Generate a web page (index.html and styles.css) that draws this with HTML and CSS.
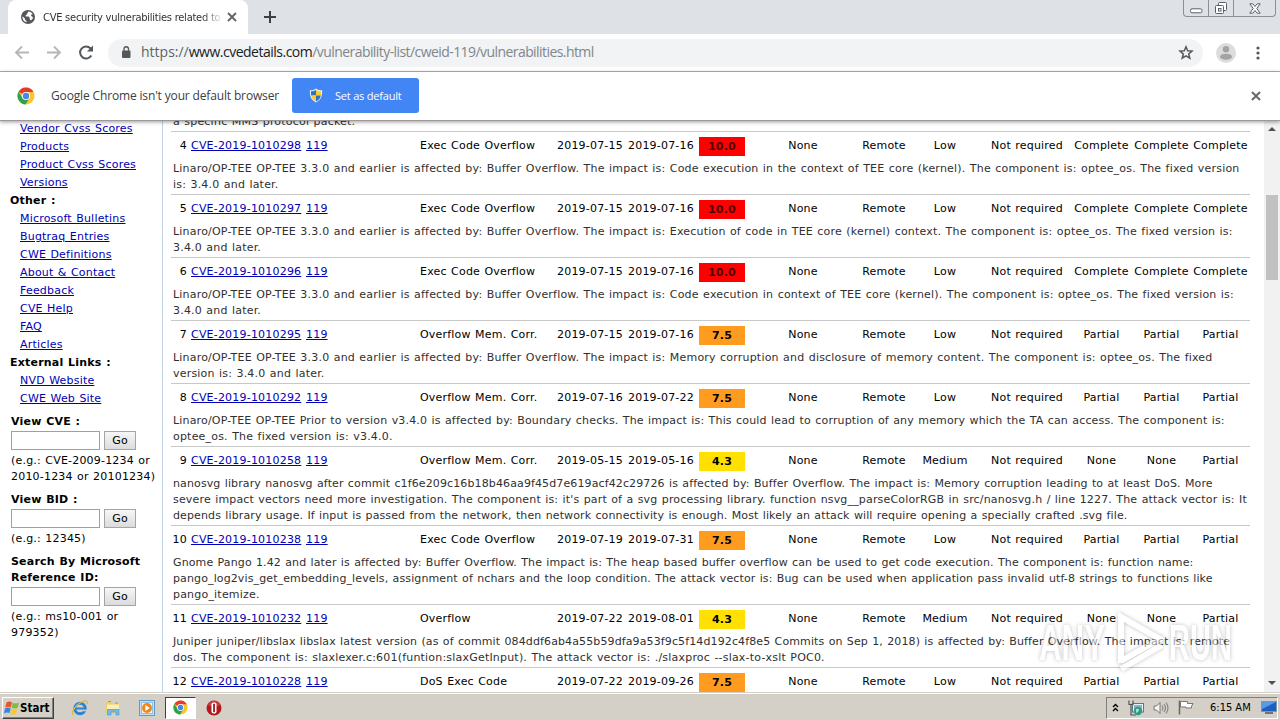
FILE: index.html
```
<!DOCTYPE html>
<html lang="en">
<head>
    <meta charset="UTF-8">
    <title>CVE security vulnerabilities related to CWE 119</title>
    <link rel="stylesheet" href="styles.css">
</head>
<body>
    <!-- Shared icons -->
    <svg class="defs" width="0" height="0">
        <symbol id="chrome" viewBox="0 0 18 18">
            <circle cx="9" cy="9" r="8.5" fill="#fbc52d"/>
            <path d="M9 9 1.6 4.8A8.5 8.5 0 0 1 16.5 5H9z" fill="#e33b2e"/>
            <path d="M9 9 5.5 11 1.6 4.8A8.5 8.5 0 0 0 8.5 17.5L12.5 11z" fill="#2ba24c"/>
            <circle cx="9" cy="9" r="4.1" fill="#fff"/>
            <circle cx="9" cy="9" r="3.2" fill="#4a86e8"/>
        </symbol>
    </svg>

    <div id="tabstrip">
        <div class="tab">
            <svg class="favicon" width="14" height="14" viewBox="0 0 14 14">
                <circle cx="7" cy="7" r="7" fill="#54585c"/>
                <path d="M7.6 1.6 6.3 3v1.2l-1.6.9v1.4h3l1 1.2v1.6l1.2 1.3 1.9-2V7l-1.7-1 .2-1.5 1.5-.5A6 6 0 0 0 7.6 1.6zM1.5 6.3l2.6 2.4v1.2l1.4 1v1.4A5.6 5.6 0 0 1 1.5 6.3z" fill="#fff"/>
            </svg>
            <span class="tab-title">CVE security vulnerabilities related to</span>
            <svg width="10" height="10" viewBox="0 0 10 10"><path d="M1 1l8 8M9 1L1 9" stroke="#5f6368" stroke-width="1.8"/></svg>
        </div>
        <svg class="new-tab" width="12" height="12" viewBox="0 0 12 12"><path d="M6 0v12M0 6h12" stroke="#3c4043" stroke-width="2"/></svg>
        <div class="window-buttons">
            <span class="wb"><svg width="13" height="6" viewBox="0 0 13 6"><rect x=".5" y=".8" width="11.5" height="4" rx="1.5" fill="#fff" stroke="#5a5e68"/></svg></span>
            <span class="wb"><svg width="14" height="14" viewBox="0 0 14 14" fill="#fff" stroke="#5a5e68"><rect x="4.5" y="1.5" width="8" height="8" rx="1"/><rect x="1.5" y="4.5" width="8" height="8" rx="1"/><rect x="4.5" y="7.5" width="2.5" height="2.5"/></svg></span>
            <span class="wb wide"><svg width="12" height="11" viewBox="0 0 12 11"><path d="M.8.8h3L6 3.5 8.2.8h3L7.8 5.5l3.4 4.7h-3L6 7.5l-2.2 2.7h-3l3.4-4.7z" fill="#fff" stroke="#5a5e68"/></svg></span>
        </div>
    </div>

    <div id="toolbar">
        <svg width="16" height="16" viewBox="0 0 16 16"><path d="M15 7.5H2M8 1.500L2 7.500l6 6" fill="none" stroke="#b4b6b9" stroke-width="1.8"/></svg>
        <svg width="16" height="16" viewBox="0 0 16 16"><path d="M1 7.5h13M8 1.500l6 6-6 6" fill="none" stroke="#b4b6b9" stroke-width="1.8"/></svg>
        <svg width="16" height="16" viewBox="0 0 16 16"><path d="M13.3 10.500A6 6 0 1 1 12.400 3.300L14 4.900" fill="none" stroke="#54585c" stroke-width="2"/><path d="M15 .5v6H9z" fill="#54585c"/></svg>
        <div class="omnibox">
            <svg width="10" height="14" viewBox="0 0 10 14"><rect x="1" y="4.5" width="8.5" height="7.5" rx="1" fill="#54585c"/><path d="M3 5.500V3a2.200 2.200 0 0 1 4.500 0V5.500" fill="none" stroke="#54585c" stroke-width="1.3"/></svg>
            <span class="url"><span class="scheme">https://</span><span class="host">www.cvedetails.com</span><span class="path">/vulnerability-list/cweid-119/vulnerabilities.html</span></span>
            <svg class="star" width="16" height="16" viewBox="0 0 16 16"><path d="M8 1.800l1.700 4 4.300.3-3.300 2.800 1.100 4.300L8 10.900l-3.800 2.300 1.100-4.300L2 6.100l4.300-.3z" fill="none" stroke="#54585c" stroke-width="1.5"/></svg>
        </div>
        <svg class="avatar" width="20" height="20" viewBox="0 0 20 20"><circle cx="10" cy="10" r="10" fill="#dcdcdc"/><circle cx="10" cy="6.3" r="3.2" fill="#a3a3a3"/><ellipse cx="10" cy="13.7" rx="6" ry="3" fill="#a3a3a3"/></svg>
        <svg class="more" width="4" height="14" viewBox="0 0 4 14" fill="#54585c"><circle cx="2" cy="2" r="1.6"/><circle cx="2" cy="7" r="1.6"/><circle cx="2" cy="12" r="1.6"/></svg>
    </div>

    <div id="infobar">
        <svg width="18" height="18"><use href="#chrome"/></svg>
        <span class="infobar-text">Google Chrome isn't your default browser</span>
        <div class="default-button">
            <svg width="14" height="15" viewBox="0 0 14 15"><path d="M7 .5C5 2 3 2.200.8 2.200c0 5 .5 9.300 6.200 12.300 5.700-3 6.200-7.300 6.200-12.300C11 2.200 9 2 7 .5z" fill="#e8f0fa"/><path d="M7 2C5.500 3 4 3.200 2 3.200V7.500h5z" fill="#2f6fc4"/><path d="M7 2c1.500 1 3 1.200 5 1.200v4.300H7z" fill="#f6cf2b"/><path d="M2.200 7.500H7v6C4 12 2.600 10 2.200 7.500z" fill="#f6cf2b"/><path d="M11.800 7.500H7v6c3-1.500 4.400-3.500 4.800-6z" fill="#2f6fc4"/></svg>
            <span>Set as default</span>
        </div>
        <svg class="infobar-close" width="10" height="10" viewBox="0 0 10 10"><path d="M1 1l8 8M9 1L1 9" stroke="#66696d" stroke-width="2"/></svg>
    </div>

    <div id="page">
        <div id="sidebar">
            <ul class="menu">
                <li><a href="#">Vendor Cvss Scores</a></li>
                <li><a href="#">Products</a></li>
                <li><a href="#">Product Cvss Scores</a></li>
                <li><a href="#">Versions</a></li>
                <li class="heading">Other :</li>
                <li><a href="#">Microsoft Bulletins</a></li>
                <li><a href="#">Bugtraq Entries</a></li>
                <li><a href="#">CWE Definitions</a></li>
                <li><a href="#">About &amp; Contact</a></li>
                <li><a href="#">Feedback</a></li>
                <li><a href="#">CVE Help</a></li>
                <li><a href="#">FAQ</a></li>
                <li><a href="#">Articles</a></li>
                <li class="heading">External Links :</li>
                <li><a href="#">NVD Website</a></li>
                <li><a href="#">CWE Web Site</a></li>
            </ul>
            <div class="lookup">
                <b>View CVE :</b>
                <div class="lookup-row"><input type="text"><button>Go</button></div>
                <span>(e.g.: CVE-2009-1234 or<br>2010-1234 or 20101234)</span>
            </div>
            <div class="lookup">
                <b>View BID :</b>
                <div class="lookup-row"><input type="text"><button>Go</button></div>
                <span>(e.g.: 12345)</span>
            </div>
            <div class="lookup">
                <b>Search By Microsoft<br>Reference ID:</b>
                <div class="lookup-row"><input type="text"><button>Go</button></div>
                <span>(e.g.: ms10-001 or<br>979352)</span>
            </div>
        </div>

        <div id="results">
            <p class="summary">a specific MMS protocol packet.</p>

            <div class="vuln">
                <span class="num">4</span><a href="#">CVE-2019-1010298</a><a href="#">119</a><span>Exec Code Overflow</span><span>2019-07-15</span><span>2019-07-16</span><span class="score critical">10.0</span><span class="c">None</span><span class="c">Remote</span><span class="c">Low</span><span class="c">Not required</span><span class="c">Complete</span><span class="c">Complete</span><span class="c">Complete</span>
            </div>
            <p class="summary">Linaro/OP-TEE OP-TEE 3.3.0 and earlier is affected by: Buffer Overflow. The impact is: Code execution in the context of TEE core (kernel). The component is: optee_os. The fixed version<br>is: 3.4.0 and later.</p>

            <div class="vuln">
                <span class="num">5</span><a href="#">CVE-2019-1010297</a><a href="#">119</a><span>Exec Code Overflow</span><span>2019-07-15</span><span>2019-07-16</span><span class="score critical">10.0</span><span class="c">None</span><span class="c">Remote</span><span class="c">Low</span><span class="c">Not required</span><span class="c">Complete</span><span class="c">Complete</span><span class="c">Complete</span>
            </div>
            <p class="summary">Linaro/OP-TEE OP-TEE 3.3.0 and earlier is affected by: Buffer Overflow. The impact is: Execution of code in TEE core (kernel) context. The component is: optee_os. The fixed version is:<br>3.4.0 and later.</p>

            <div class="vuln">
                <span class="num">6</span><a href="#">CVE-2019-1010296</a><a href="#">119</a><span>Exec Code Overflow</span><span>2019-07-15</span><span>2019-07-16</span><span class="score critical">10.0</span><span class="c">None</span><span class="c">Remote</span><span class="c">Low</span><span class="c">Not required</span><span class="c">Complete</span><span class="c">Complete</span><span class="c">Complete</span>
            </div>
            <p class="summary">Linaro/OP-TEE OP-TEE 3.3.0 and earlier is affected by: Buffer Overflow. The impact is: Code execution in context of TEE core (kernel). The component is: optee_os. The fixed version is:<br>3.4.0 and later.</p>

            <div class="vuln">
                <span class="num">7</span><a href="#">CVE-2019-1010295</a><a href="#">119</a><span>Overflow Mem. Corr.</span><span>2019-07-15</span><span>2019-07-16</span><span class="score high">7.5</span><span class="c">None</span><span class="c">Remote</span><span class="c">Low</span><span class="c">Not required</span><span class="c">Partial</span><span class="c">Partial</span><span class="c">Partial</span>
            </div>
            <p class="summary">Linaro/OP-TEE OP-TEE 3.3.0 and earlier is affected by: Buffer Overflow. The impact is: Memory corruption and disclosure of memory content. The component is: optee_os. The fixed<br>version is: 3.4.0 and later.</p>

            <div class="vuln">
                <span class="num">8</span><a href="#">CVE-2019-1010292</a><a href="#">119</a><span>Overflow Mem. Corr.</span><span>2019-07-16</span><span>2019-07-22</span><span class="score high">7.5</span><span class="c">None</span><span class="c">Remote</span><span class="c">Low</span><span class="c">Not required</span><span class="c">Partial</span><span class="c">Partial</span><span class="c">Partial</span>
            </div>
            <p class="summary"><span class="snug">Linaro/OP-TEE OP-TEE Prior to version v3.4.0 is affected by: Boundary checks. The impact is: This could lead to corruption of any memory which the TA can access. The component is:</span><br>optee_os. The fixed version is: v3.4.0.</p>

            <div class="vuln">
                <span class="num">9</span><a href="#">CVE-2019-1010258</a><a href="#">119</a><span>Overflow Mem. Corr.</span><span>2019-05-15</span><span>2019-05-16</span><span class="score medium">4.3</span><span class="c">None</span><span class="c">Remote</span><span class="c">Medium</span><span class="c">Not required</span><span class="c">None</span><span class="c">None</span><span class="c">Partial</span>
            </div>
            <p class="summary"><span class="tight">nanosvg library nanosvg after commit c1f6e209c16b18b46aa9f45d7e619acf42c29726 is affected by: Buffer Overflow. The impact is: Memory corruption leading to at least DoS. More</span><br><span class="snug">severe impact vectors need more investigation. The component is: it's part of a svg processing library. function nsvg__parseColorRGB in src/nanosvg.h / line 1227. The attack vector is: It</span><br><span class="tight">depends library usage. If input is passed from the network, then network connectivity is enough. Most likely an attack will require opening a specially crafted .svg file.</span></p>

            <div class="vuln">
                <span class="num">10</span><a href="#">CVE-2019-1010238</a><a href="#">119</a><span>Exec Code Overflow</span><span>2019-07-19</span><span>2019-07-31</span><span class="score high">7.5</span><span class="c">None</span><span class="c">Remote</span><span class="c">Low</span><span class="c">Not required</span><span class="c">Partial</span><span class="c">Partial</span><span class="c">Partial</span>
            </div>
            <p class="summary"><span class="tight">Gnome Pango 1.42 and later is affected by: Buffer Overflow. The impact is: The heap based buffer overflow can be used to get code execution. The component is: function name:</span><br><span class="tight">pango_log2vis_get_embedding_levels, assignment of nchars and the loop condition. The attack vector is: Bug can be used when application pass invalid utf-8 strings to functions like</span><br>pango_itemize.</p>

            <div class="vuln">
                <span class="num">11</span><a href="#">CVE-2019-1010232</a><a href="#">119</a><span>Overflow</span><span>2019-07-22</span><span>2019-08-01</span><span class="score medium">4.3</span><span class="c">None</span><span class="c">Remote</span><span class="c">Medium</span><span class="c">Not required</span><span class="c">None</span><span class="c">None</span><span class="c">Partial</span>
            </div>
            <p class="summary"><span class="tight">Juniper juniper/libslax libslax latest version (as of commit 084ddf6ab4a55b59dfa9a53f9c5f14d192c4f8e5 Commits on Sep 1, 2018) is affected by: Buffer Overflow. The impact is: remote</span><br>dos. The component is: slaxlexer.c:601(funtion:slaxGetInput). The attack vector is: ./slaxproc --slax-to-xslt POC0.</p>

            <div class="vuln">
                <span class="num">12</span><a href="#">CVE-2019-1010228</a><a href="#">119</a><span>DoS Exec Code</span><span>2019-07-22</span><span>2019-09-26</span><span class="score high">7.5</span><span class="c">None</span><span class="c">Remote</span><span class="c">Low</span><span class="c">Not required</span><span class="c">Partial</span><span class="c">Partial</span><span class="c">Partial</span>
            </div>
        </div>

        <div class="scrollbar">
            <svg width="8" height="4" viewBox="0 0 8 4"><path d="M0 4l4-4 4 4z" fill="#505050"/></svg>
            <div class="thumb"></div>
            <svg width="8" height="4" viewBox="0 0 8 4"><path d="M0 0l4 4 4-4z" fill="#505050"/></svg>
        </div>
    </div>

    <div id="taskbar">
        <div class="start">
            <svg width="16" height="16" viewBox="0 0 16 16"><path d="M2.5 2.500Q5 .5 8 2.300L6.900 7.400Q4 5.800 1.200 7.600z" fill="#e8562a"/><path d="M8.800 2.800q3 1.500 6.200-.3l-1.400 5.200q-3 1.600-5.900.1z" fill="#7dbb42"/><path d="M1 8.500q3-1.700 5.700-.1L5.500 13Q3 11.700 0 13.300z" fill="#3c85d6"/><path d="M7.500 8.900q3 1.500 5.900-.1L12 14q-3 1.600-5.700-.3z" fill="#f8c832"/></svg>
            <b>Start</b>
        </div>
        <svg class="ie" width="18" height="16" viewBox="0 0 18 16"><circle cx="9" cy="8.5" r="5.2" fill="none" stroke="#2b83d4" stroke-width="3"/><path d="M5 8.500h9.500" stroke="#2b83d4" stroke-width="2"/><path d="M12 10.500h5" stroke="#d4d0c8" stroke-width="1.6"/><path d="M2.300 15C-.5 13 4 5.500 9.500 2.500 14-.2 17.500.5 16 4" fill="none" stroke="#e3b83c" stroke-width="1.3"/></svg>
        <svg class="explorer" width="16" height="16" viewBox="0 0 16 16"><path d="M1 2h5l1 1.500h7V13H1z" fill="#e9ce74"/><path d="M2 4.500h12V9H2z" fill="#fbf0b4"/><path d="M3 1.500h3M10 3h3" stroke="#6bb36b"/><path d="M2.500 15V9.500h11.500V15h-3v-3H6v3z" fill="#76b9e4" stroke="#4a94cc" stroke-width=".6"/></svg>
        <svg class="player" width="16" height="16" viewBox="0 0 16 16"><rect x=".5" y=".5" width="15" height="15" fill="#c5e0f4" stroke="#5c9ccc"/><rect x="2.5" y="2.5" width="11" height="11" fill="#eaf4fb" stroke="#93bfe0"/><circle cx="8" cy="8" r="5" fill="#f28518"/><path d="M6.300 5l4.500 3-4.500 3z" fill="#fff"/></svg>
        <div class="task-active"><svg width="15" height="15"><use href="#chrome"/></svg></div>
        <svg class="opera" width="16" height="16" viewBox="0 0 16 16"><circle cx="8" cy="8" r="7.5" fill="#b41a1c"/><path d="M2 5a6.500 6.500 0 0 1 12 0Q8 8 2 5z" fill="#e05a58" opacity=".6"/><rect x="5.500" y="2.500" width="5" height="11" rx="2" fill="#fff"/><rect x="7.200" y="3.800" width="1.700" height="8.400" fill="#8c1012"/></svg>
        <div class="tray">
            <svg class="chevrons" width="7" height="9" viewBox="0 0 7 9"><path d="M1 4l2.500-2.500L6 4M1 8l2.500-2.500L6 8" fill="none" stroke="#000" stroke-width="1.4"/></svg>
            <svg width="16" height="16" viewBox="0 0 16 16"><rect x="4.5" y="3.5" width="11" height="8.5" fill="#e7f2f4" stroke="#5b7a80"/><rect x="6" y="5" width="8" height="5.5" fill="#7fb8c8"/><path d="M1 .5v4h4v-4M3 4v11h5" fill="none" stroke="#555" stroke-width="1.2"/><circle cx="10" cy="11" r="4.2" fill="#2c9c86"/><path d="M8 9q3-1 3 1t-3 3z" fill="#a9e0cc"/></svg>
            <svg width="16" height="14" viewBox="0 0 16 14"><path d="M1 5h2.500L7 1.500v11L3.500 9H1z" fill="#f5f5f5" stroke="#777"/><path d="M9 4.500q1.800 2.500 0 5M11 3q3 4 0 8M13 1.500q4 5.500 0 11" fill="none" stroke="#888" stroke-width="1.2"/></svg>
            <svg width="17" height="15" viewBox="0 0 17 15"><path d="M1.500.5v14" stroke="#666" stroke-width="1.5"/><path d="M2.500 1.500h7v2H15l-1.500 2.700V8H8V7H2.500z" fill="#fff" stroke="#777"/></svg>
            <span class="clock">6:15 AM</span>
            <svg width="16" height="13" viewBox="0 0 16 13"><rect x=".5" y=".5" width="15" height="10" fill="#1d5fc0" stroke="#7796b8"/><path d="M1 1h14L1 8z" fill="#5a9ae4"/><path d="M4 12h8" stroke="#555" stroke-width="1.5"/></svg>
        </div>
    </div>

    <svg class="watermark" width="200" height="68" viewBox="0 0 200 68">
        <text x="3" y="52" textLength="66" lengthAdjust="spacingAndGlyphs">ANY</text>
        <path d="M85 55V9L124 31 85 53"/>
        <path d="M85 61l41-24"/>
        <text x="133" y="52" textLength="63" lengthAdjust="spacingAndGlyphs">RUN</text>
    </svg>
</body>
</html>
```
FILE: styles.css
```
* {
    box-sizing: border-box;
}

body {
    margin: 0;
    width: 1280px;
    height: 720px;
    display: flex;
    flex-direction: column;
    overflow: hidden;
    font-family: Verdana, "DejaVu Sans", sans-serif;
    font-size: 11px;
    background: #fff;
    color: #000;
}

svg {
    flex-shrink: 0;
}

.defs {
    position: absolute;
}

/* --- Browser chrome --- */
#tabstrip {
    height: 34px;
    flex-shrink: 0;
    display: flex;
    background: #dee1e6;
    padding-left: 8px;
}

.tab {
    width: 240px;
    height: 34px;
    display: flex;
    align-items: center;
    background: #fff;
    border-radius: 8px 8px 0 0;
    padding-left: 13px;
}

.tab-title {
    width: 178px;
    margin: 0 6px 0 8px;
    overflow: hidden;
    white-space: nowrap;
    font-family: "DejaVu Sans Condensed", "DejaVu Sans", sans-serif;
    font-stretch: condensed;
    font-size: 11px;
    letter-spacing: -0.24px;
    color: #303236;
    -webkit-mask-image: linear-gradient(to right, #000 160px, transparent 180px);
}

.new-tab {
    margin: 11px 0 0 16px;
}

.window-buttons {
    display: flex;
    height: 17px;
    margin-left: auto;
    margin-right: 4px;
    border: 1px solid #8b8f99;
    border-top: none;
    border-radius: 0 0 4px 4px;
}

.wb {
    width: 25px;
    display: flex;
    align-items: center;
    justify-content: center;
    border-right: 1px solid #8b8f99;
}

.wb:first-child {
    align-items: flex-end;
    padding-bottom: 2px;
}

.wb.wide {
    width: 41px;
    border-right: none;
}

#toolbar {
    height: 38px;
    flex-shrink: 0;
    display: flex;
    align-items: center;
    gap: 16px;
    padding: 0 20px 0 14px;
    border-bottom: 1px solid #b0b2b5;
}

.omnibox {
    width: 1095px;
    height: 28px;
    display: flex;
    align-items: center;
    margin-left: -2px;
    padding: 0 9px 0 13px;
    border-radius: 14px;
    background: #f1f3f4;
}

.url {
    margin: -2px 0 0 10px;
    font-family: "Open Sans", sans-serif;
    font-size: 14px;
    white-space: nowrap;
}

.scheme {
    color: #5f6368;
}

.host {
    color: #202124;
    letter-spacing: -0.5px;
}

.path {
    color: #80868b;
    letter-spacing: -0.57px;
}

.star {
    margin-left: auto;
}

.avatar {
    margin-left: -3px;
}

.more {
    margin-left: 4px;
}

#infobar {
    height: 49px;
    flex-shrink: 0;
    display: flex;
    align-items: center;
    padding: 0 19px 0 17px;
    border-bottom: 1px solid #9a9a9a;
    box-shadow: 0 1px 4px rgba(0, 0, 0, 0.4);
    background: #fff;
    z-index: 1;
}

.infobar-text {
    width: 241px;
    margin-top: -2px;
    padding-left: 16px;
    white-space: nowrap;
    font-family: "Open Sans", sans-serif;
    font-size: 12px;
    letter-spacing: -0.15px;
    color: #3c4043;
}

.default-button {
    width: 127px;
    height: 35px;
    display: flex;
    align-items: center;
    margin: -2px 0 0 16px;
    padding-left: 17px;
    gap: 12px;
    border-radius: 3px;
    background: #4285f4;
    color: #fff;
    font-family: "Open Sans", sans-serif;
    font-size: 11px;
    letter-spacing: -0.2px;
}

.infobar-close {
    margin-left: auto;
}

/* --- Page --- */
#page {
    height: 571px;
    flex-shrink: 0;
    display: flex;
    overflow: hidden;
    letter-spacing: 0.2px;
    word-spacing: 0.65px;
}

a {
    color: #0000b4;
}

#sidebar {
    width: 163px;
    flex-shrink: 0;
    border-right: 1px solid #c3d3e8;
}

.menu {
    list-style: none;
    margin: -1px 0 6px;
    padding: 0 0 0 20px;
    line-height: 18px;
}

.menu .heading {
    margin-left: -10px;
    font-weight: bold;
}

.lookup {
    padding-left: 11px;
    margin-bottom: 7px;
    line-height: 16px;
    white-space: nowrap;
}

.lookup b,
.lookup > span {
    display: block;
}

.lookup-row {
    height: 23px;
    display: flex;
    align-items: center;
    gap: 4px;
    padding-bottom: 2px;
}

.lookup input {
    width: 89px;
    height: 19px;
    border: 1px solid #a0a0a0;
    padding: 0;
}

.lookup button {
    width: 32px;
    height: 19px;
    padding: 1px 0 0;
    border: 1px solid #a4a4a4;
    background: linear-gradient(#f6f6f6, #dcdcdc);
    font: inherit;
    line-height: 16px;
}

#results {
    width: 1079px;
    margin: -7px 0 0 8px;
    flex-shrink: 0;
}

.vuln {
    height: 30px;
    display: grid;
    grid-template-columns: 20px 115px 114px 137px 71px 71px 46px 116px 46px 76px 88px 61px 59px 59px;
    line-height: 27px;
    border-top: 1px solid #c8c8c8;
    white-space: nowrap;
}

.num {
    text-align: right;
    padding-right: 4px;
}

.c {
    text-align: center;
}

.score {
    height: 19px;
    margin-top: 5px;
    line-height: 20px;
    text-align: center;
    font-weight: bold;
}

.critical {
    background: #f00;
    color: #4c0000;
}

.high {
    background: #ff9c20;
}

.medium {
    background: #ffe000;
}

.summary {
    margin: 0;
    padding: 0 0 1px 2px;
    line-height: 16px;
    white-space: nowrap;
    color: #303030;
}

.snug {
    letter-spacing: 0.17px;
}

.tight {
    letter-spacing: 0.12px;
}

.scrollbar {
    width: 16px;
    margin-left: auto;
    padding: 6px 0 7px;
    display: flex;
    flex-direction: column;
    align-items: center;
    background: #f1f1f1;
}

.thumb {
    width: 12px;
    height: 85px;
    margin: 64px 0 auto;
    background: #c1c1c1;
}

/* --- Taskbar --- */
#taskbar {
    height: 28px;
    flex-shrink: 0;
    display: flex;
    align-items: center;
    padding: 2px 2px 0;
    border-top: 1px solid #d4d0c8;
    box-shadow: inset 0 1px #fff;
    background: #d4d0c8;
}

.start {
    width: 52px;
    height: 22px;
    display: flex;
    align-items: center;
    padding-left: 1px;
    border: 1px solid;
    border-color: #fff #404040 #404040 #fff;
    box-shadow: inset -1px -1px #808080;
    font-family: "DejaVu Sans Condensed", "DejaVu Sans", sans-serif;
    font-stretch: condensed;
    font-size: 11.5px;
}

.ie {
    margin-left: 17px;
}

.explorer {
    margin-left: 16px;
}

.player {
    margin-left: 18px;
}

.task-active {
    width: 31px;
    height: 22px;
    margin-left: 10px;
    display: flex;
    align-items: center;
    justify-content: center;
    background: #fff;
    border: 1px solid;
    border-color: #404040 #fff #fff #404040;
}

.opera {
    margin-left: 10px;
}

.tray {
    width: 172px;
    height: 22px;
    display: flex;
    align-items: center;
    gap: 9px;
    margin-left: auto;
    padding-left: 5px;
    border: 1px solid;
    border-color: #808080 #fff #fff #808080;
}

.clock {
    width: 43px;
    margin: 0 1px 0 6px;
    white-space: nowrap;
    font-family: "DejaVu Sans Condensed", "DejaVu Sans", sans-serif;
    font-stretch: condensed;
    font-size: 11px;
}

/* Recorder logo laid over the screen */
.watermark {
    position: absolute;
    left: 1036px;
    top: 608px;
    z-index: 2;
    font: bold 50px "Liberation Sans", sans-serif;
    fill: #fff;
    opacity: 0.5;
    filter: drop-shadow(0 0 2px rgba(0, 0, 0, 0.5));
    pointer-events: none;
}

.watermark path {
    fill: none;
    stroke: #fff;
    stroke-width: 6px;
}
```
